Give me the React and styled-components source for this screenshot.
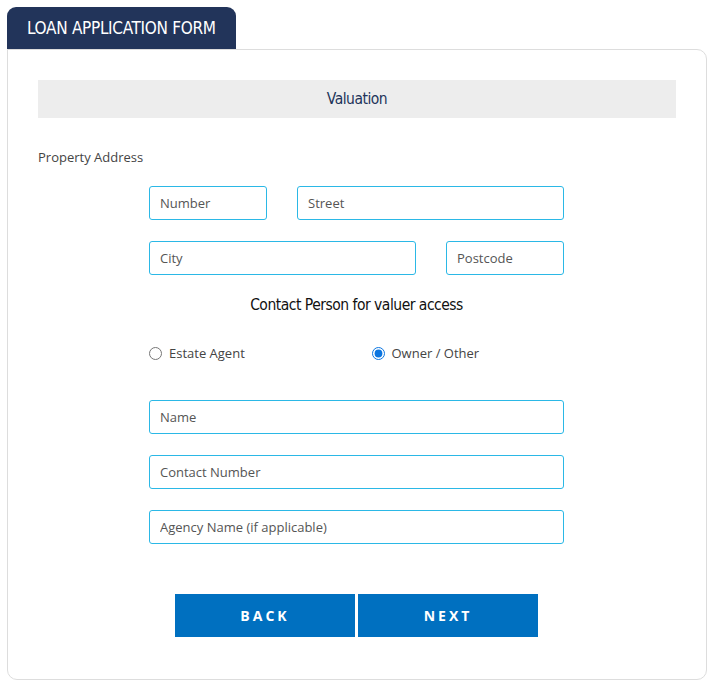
import React from "react";
import styled, { createGlobalStyle } from "styled-components";

const GlobalStyle = createGlobalStyle`
  body {
    margin: 0;
    background: #ffffff;
    font-family: "Open Sans", "Liberation Sans", sans-serif;
  }
`;

const condensed = `
  font-family: "DejaVu Sans", sans-serif;
  font-stretch: condensed;
  white-space: nowrap;
`;

const Page = styled.div`
  padding: 7px 10px 8px 7px;
  width: 700px;
`;

const Tab = styled.div`
  display: flex;
  align-items: center;
  height: 42px;
  padding: 0 20px;
  width: 229px;
  box-sizing: border-box;
  background: #22345a;
  color: #ffffff;
  border-radius: 9px 9px 0 0;
  ${condensed}
  font-size: 17px;
  letter-spacing: -0.3px;
`;

const Card = styled.div`
  border: 1px solid #dddddd;
  border-radius: 0 10px 10px 10px;
  padding: 30px 30px 42px 30px;
`;

const SectionBar = styled.div`
  background: #ededed;
  height: 38px;
  display: flex;
  align-items: center;
  justify-content: center;
  color: #22345a;
  ${condensed}
  font-size: 15.5px;
  letter-spacing: -0.5px;
`;

const Label = styled.div`
  margin-top: 30px;
  font-size: 13px;
  color: #444444;
`;

const Fields = styled.div`
  width: 415px;
  margin-left: 111px;
`;

const Row = styled.div`
  display: grid;
  grid-template-columns: ${(p) => p.$cols || "1fr"};
  column-gap: 30px;
  margin-top: ${(p) => p.$top || 21}px;
`;

const Input = styled.input`
  box-sizing: border-box;
  width: 100%;
  height: 34px;
  border: 1px solid #2bb8e6;
  border-radius: 3px;
  padding: 0 10px;
  font-family: "Open Sans", sans-serif;
  font-size: 13px;
  color: #444444;
  outline: none;

  &::placeholder {
    color: #555555;
  }
`;

const SubHeading = styled.div`
  margin-top: 21px;
  text-align: center;
  ${condensed}
  font-size: 15.5px;
  letter-spacing: -0.5px;
  color: #111111;
`;

const RadioLabel = styled.label`
  display: flex;
  align-items: center;
  gap: 7px;
  font-size: 13px;
  color: #444444;
`;

const Radio = styled.input`
  margin: 0;
  width: 13px;
  height: 13px;
  accent-color: #0b75e0;
`;

const Buttons = styled.div`
  display: flex;
  justify-content: center;
  gap: 3px;
  margin-top: 50px;
  padding-right: 1px;
`;

const Button = styled.button`
  width: 180px;
  height: 43px;
  border: none;
  background: #0070c0;
  color: #ffffff;
  font-family: "Open Sans", sans-serif;
  font-weight: 700;
  font-size: 14px;
  letter-spacing: 3px;
  cursor: pointer;
`;

export default function App() {
  return (
    <Page>
      <GlobalStyle />
      <Tab>LOAN APPLICATION FORM</Tab>
      <Card>
        <SectionBar>Valuation</SectionBar>
        <Label>Property Address</Label>
        <Fields>
          <Row $cols="118px 1fr" $top={20}>
            <Input placeholder="Number" />
            <Input placeholder="Street" />
          </Row>
          <Row $cols="1fr 118px">
            <Input placeholder="City" />
            <Input placeholder="Postcode" />
          </Row>
          <SubHeading>Contact Person for valuer access</SubHeading>
          <Row $cols="1fr 1fr" $top={30}>
            <RadioLabel>
              <Radio type="radio" name="contact" />
              Estate Agent
            </RadioLabel>
            <RadioLabel>
              <Radio type="radio" name="contact" defaultChecked />
              Owner / Other
            </RadioLabel>
          </Row>
          <Row $top={38}>
            <Input placeholder="Name" />
          </Row>
          <Row>
            <Input placeholder="Contact Number" />
          </Row>
          <Row>
            <Input placeholder="Agency Name (if applicable)" />
          </Row>
        </Fields>
        <Buttons>
          <Button>BACK</Button>
          <Button>NEXT</Button>
        </Buttons>
      </Card>
    </Page>
  );
}
